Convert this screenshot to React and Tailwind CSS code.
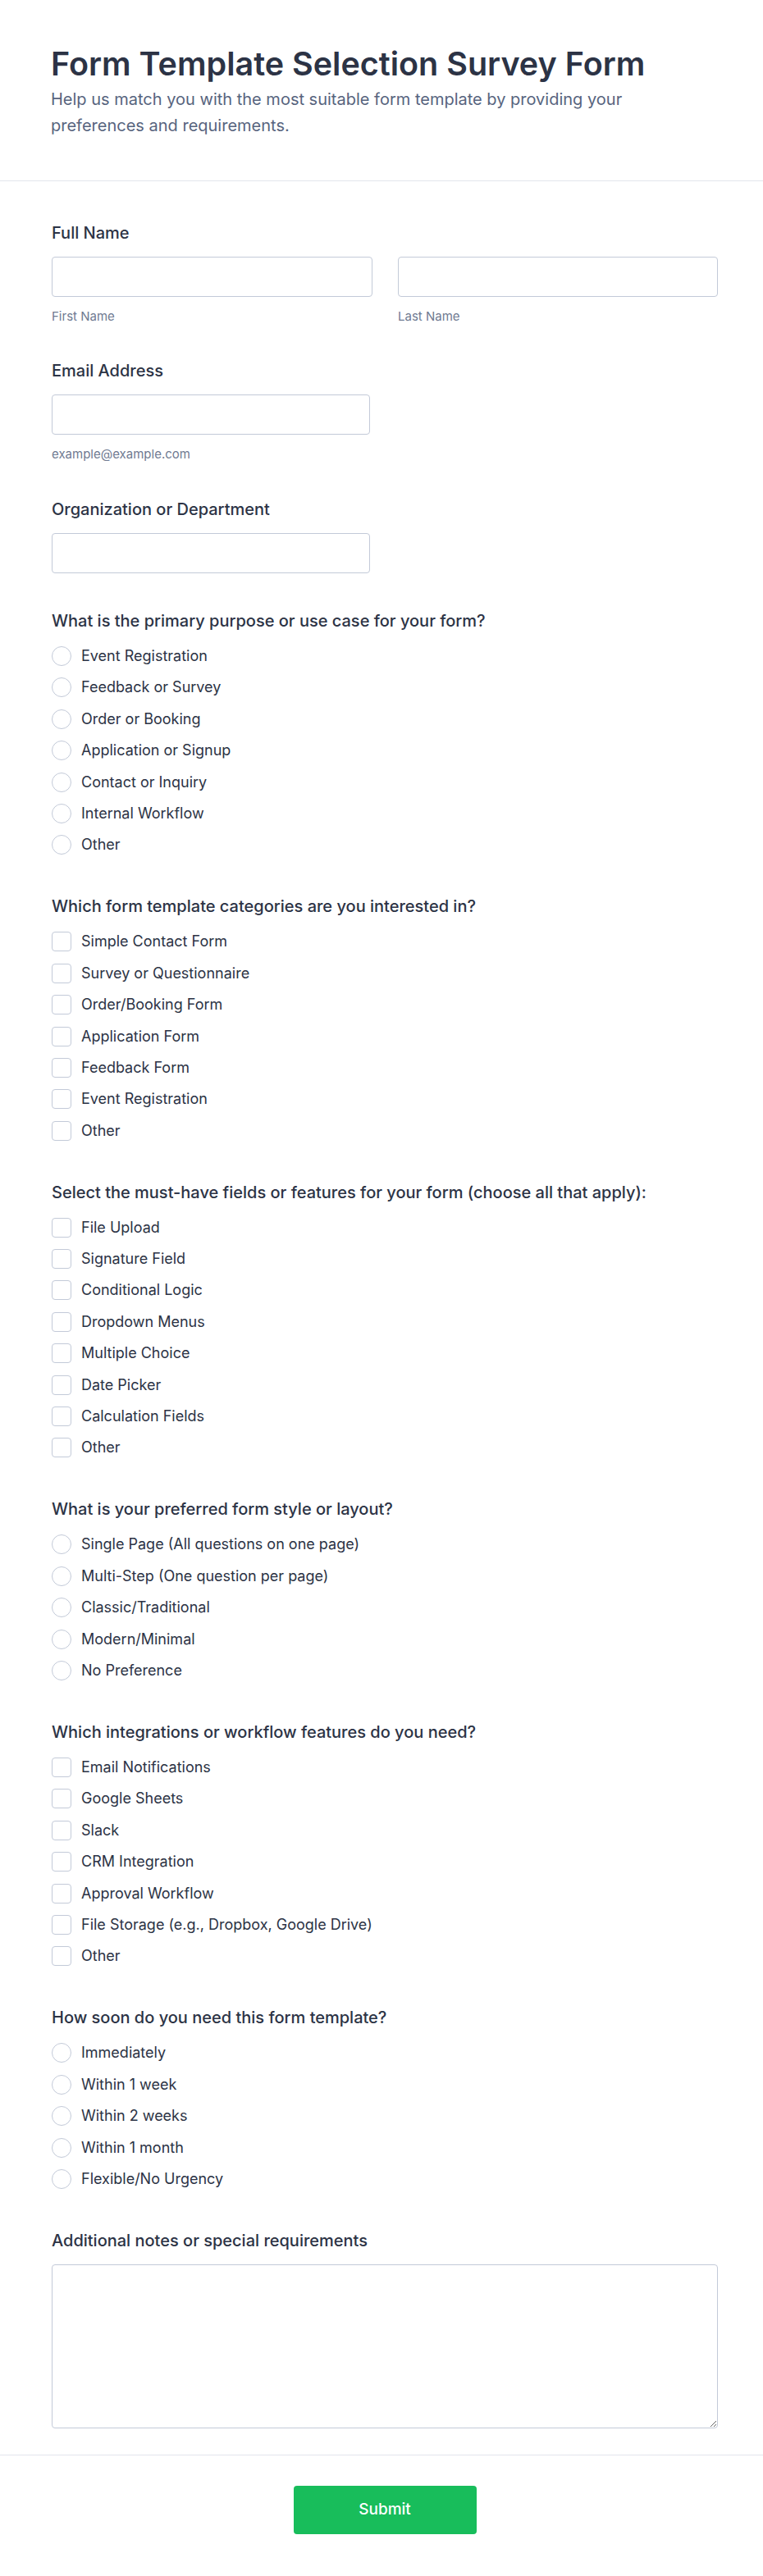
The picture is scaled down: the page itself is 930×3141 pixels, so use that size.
import React from "react";

const questions = [
  {
    label: "What is the primary purpose or use case for your form?",
    type: "radio",
    options: [
      "Event Registration",
      "Feedback or Survey",
      "Order or Booking",
      "Application or Signup",
      "Contact or Inquiry",
      "Internal Workflow",
      "Other",
    ],
  },
  {
    label: "Which form template categories are you interested in?",
    type: "checkbox",
    options: [
      "Simple Contact Form",
      "Survey or Questionnaire",
      "Order/Booking Form",
      "Application Form",
      "Feedback Form",
      "Event Registration",
      "Other",
    ],
  },
  {
    label:
      "Select the must-have fields or features for your form (choose all that apply):",
    type: "checkbox",
    options: [
      "File Upload",
      "Signature Field",
      "Conditional Logic",
      "Dropdown Menus",
      "Multiple Choice",
      "Date Picker",
      "Calculation Fields",
      "Other",
    ],
  },
  {
    label: "What is your preferred form style or layout?",
    type: "radio",
    options: [
      "Single Page (All questions on one page)",
      "Multi-Step (One question per page)",
      "Classic/Traditional",
      "Modern/Minimal",
      "No Preference",
    ],
  },
  {
    label: "Which integrations or workflow features do you need?",
    type: "checkbox",
    options: [
      "Email Notifications",
      "Google Sheets",
      "Slack",
      "CRM Integration",
      "Approval Workflow",
      "File Storage (e.g., Dropbox, Google Drive)",
      "Other",
    ],
  },
  {
    label: "How soon do you need this form template?",
    type: "radio",
    options: [
      "Immediately",
      "Within 1 week",
      "Within 2 weeks",
      "Within 1 month",
      "Flexible/No Urgency",
    ],
  },
];

const FieldLabel = ({ children }) => (
  <label className="block text-[20px] leading-[24px] font-medium text-[#2c3345]">
    {children}
  </label>
);

const TextBox = ({ width }) => (
  <input
    type="text"
    className={`${width} h-[49px] rounded-[4px] border border-[#c3cad8] bg-white px-3 outline-none`}
  />
);

const SubLabel = ({ children }) => (
  <div className="mt-[15px] text-[15px] leading-[18px] text-[#6f7a91]">
    {children}
  </div>
);

const ChoiceList = ({ type, options }) => (
  <div className="mt-[19px] flex flex-col gap-[14.4px] pb-[5px]">
    {options.map((opt) => (
      <label key={opt} className="flex h-[24px] items-center">
        <span
          className={
            type === "radio"
              ? "h-[24px] w-[24px] shrink-0 rounded-full border border-[#c3cad8] bg-white"
              : "h-[24px] w-[24px] shrink-0 rounded-[4px] border border-[#c3cad8] bg-white"
          }
        />
        <span className="ml-[12px] text-[18px] leading-[24px] text-[#2c3345]">
          {opt}
        </span>
      </label>
    ))}
  </div>
);

export default function App() {
  return (
    <div className="min-h-screen bg-white font-['Inter','Noto_Sans',sans-serif]">
      {/* Header */}
      <div className="border-b border-[#e3e5ec] pl-[62px] pr-[55px] pt-[54px] pb-[51px]">
        <h1 className="text-[39.5px] leading-[48px] font-semibold text-[#2c3345]">
          Form Template Selection Survey Form
        </h1>
        <p className="mt-[3px] max-w-[760px] text-[20px] leading-[32px] text-[#57647e]">
          Help us match you with the most suitable form template by providing
          your preferences and requirements.
        </p>
      </div>

      {/* Body */}
      <div className="pl-[63px] pr-[55px] pt-[51px] pb-[32px]">
        <div>
          <FieldLabel>Full Name</FieldLabel>
          <div className="mt-[17px] flex gap-[31px]">
            <div className="w-[391px]">
              <TextBox width="w-full" />
              <SubLabel>First Name</SubLabel>
            </div>
            <div className="flex-1">
              <TextBox width="w-full" />
              <SubLabel>Last Name</SubLabel>
            </div>
          </div>
        </div>

        <div className="mt-[45px]">
          <FieldLabel>Email Address</FieldLabel>
          <div className="mt-[17px]">
            <TextBox width="w-[388px]" />
            <SubLabel>example@example.com</SubLabel>
          </div>
        </div>

        <div className="mt-[46px]">
          <FieldLabel>Organization or Department</FieldLabel>
          <div className="mt-[17px]">
            <TextBox width="w-[388px]" />
          </div>
        </div>

        {questions.map((q) => (
          <div key={q.label} className="mt-[46px]">
            <FieldLabel>{q.label}</FieldLabel>
            <ChoiceList type={q.type} options={q.options} />
          </div>
        ))}

        <div className="mt-[46px]">
          <FieldLabel>Additional notes or special requirements</FieldLabel>
          <textarea className="mt-[17px] block h-[200px] w-full rounded-[4px] border border-[#c3cad8] bg-white p-3 outline-none" />
        </div>
      </div>

      {/* Footer */}
      <div className="flex justify-center border-t border-[#e3e5ec] pl-[63px] pr-[55px] pt-[37px] pb-[50px]">
        <button className="h-[59px] w-[223px] rounded-[4px] bg-[#18bd5b] text-[19px] font-medium text-white">
          Submit
        </button>
      </div>
    </div>
  );
}
